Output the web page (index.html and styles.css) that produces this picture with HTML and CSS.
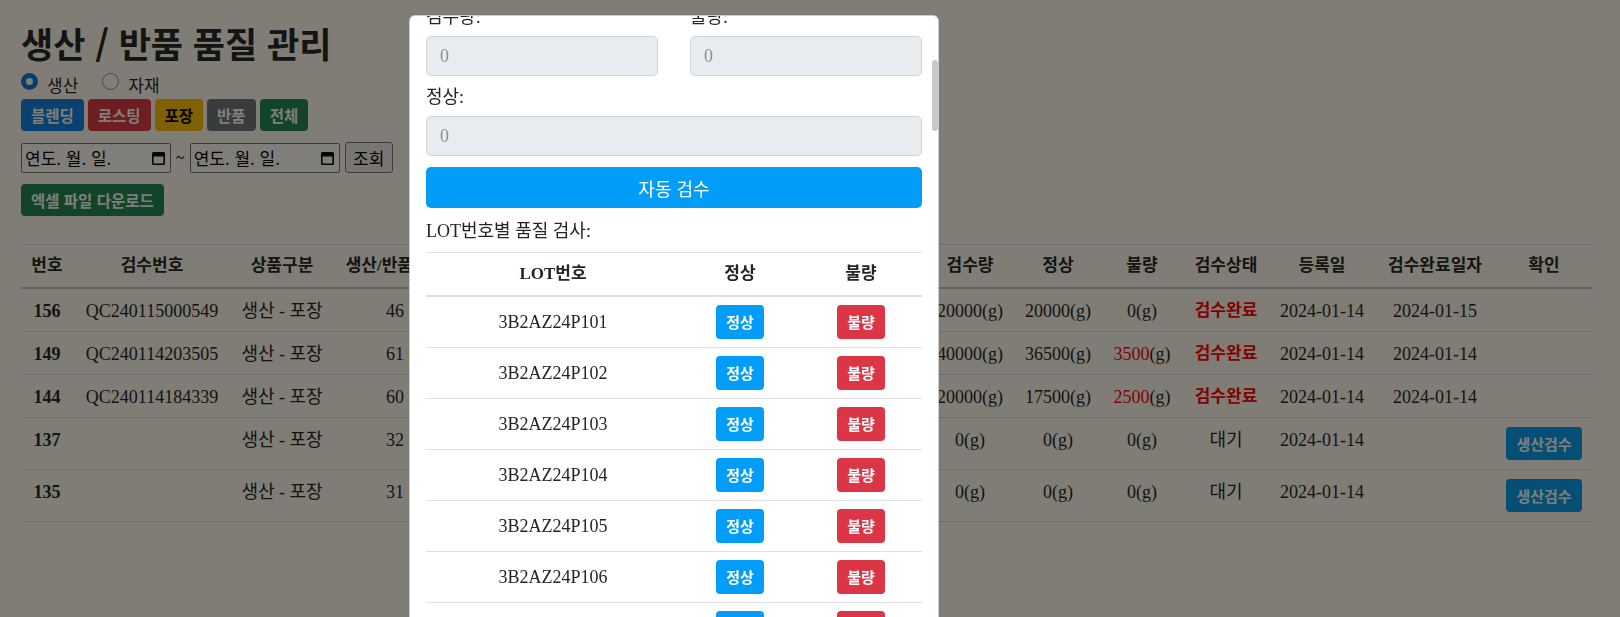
FILE: index.html
```html
<!DOCTYPE html>
<html lang="ko">
<head>
<meta charset="utf-8">
<title>생산 / 반품 품질 관리</title>
<link rel="stylesheet" href="styles.css">
</head>
<body>
<div class="page">
  <h1 class="page-title">생산 / 반품 품질 관리</h1>
  <div class="radio-row">
    <label class="radio-item"><input class="radio" type="radio" name="kind" checked><span class="radio-text">생산</span></label>
    <label class="radio-item"><input class="radio" type="radio" name="kind"><span class="radio-text">자재</span></label>
  </div>
  <div class="filter-row">
    <button class="btn btn-blue">블렌딩</button>
    <button class="btn btn-red">로스팅</button>
    <button class="btn btn-yellow">포장</button>
    <button class="btn btn-gray">반품</button>
    <button class="btn btn-green">전체</button>
  </div>
  <div class="date-row">
    <div class="date-field"><span>연도. 월. 일.</span><svg class="cal" width="15" height="16" viewBox="0 0 15 16"><path fill-rule="evenodd" d="M2.5 2h10A1.5 1.5 0 0 1 14 3.5v10a1.5 1.5 0 0 1-1.5 1.5h-10A1.5 1.5 0 0 1 1 13.5v-10A1.5 1.5 0 0 1 2.5 2zM2.6 6.4v7h9.8v-7z"/></svg></div>
    <span class="tilde">~</span>
    <div class="date-field"><span>연도. 월. 일.</span><svg class="cal" width="15" height="16" viewBox="0 0 15 16"><path fill-rule="evenodd" d="M2.5 2h10A1.5 1.5 0 0 1 14 3.5v10a1.5 1.5 0 0 1-1.5 1.5h-10A1.5 1.5 0 0 1 1 13.5v-10A1.5 1.5 0 0 1 2.5 2zM2.6 6.4v7h9.8v-7z"/></svg></div>
    <button class="search-btn">조회</button>
  </div>
  <div class="excel-row"><button class="btn btn-green btn-excel">엑셀 파일 다운로드</button></div>

  <table class="qc-table">
    <colgroup>
      <col class="c-no"><col class="c-code"><col class="c-type"><col class="c-qty">
      <col class="c-name"><col class="c-lot"><col class="c-user">
      <col class="c-insp"><col class="c-ok"><col class="c-bad"><col class="c-state">
      <col class="c-reg"><col class="c-done"><col class="c-act">
    </colgroup>
    <thead>
      <tr>
        <th>번호</th><th>검수번호</th><th>상품구분</th><th>생산/반품수량</th>
        <th>제품명</th><th>LOT 수</th><th>검수자</th>
        <th>검수량</th><th>정상</th><th>불량</th><th>검수상태</th><th>등록일</th><th>검수완료일자</th><th>확인</th>
      </tr>
    </thead>
    <tbody>
      <tr>
        <th>156</th><td>QC240115000549</td><td>생산 - 포장</td><td>46</td>
        <td>드립백 블렌드</td><td>6</td><td>관리자</td>
        <td>20000(g)</td><td>20000(g)</td><td>0(g)</td><td class="done">검수완료</td><td>2024-01-14</td><td>2024-01-15</td><td></td>
      </tr>
      <tr>
        <th>149</th><td>QC240114203505</td><td>생산 - 포장</td><td>61</td>
        <td>드립백 블렌드</td><td>8</td><td>관리자</td>
        <td>40000(g)</td><td>36500(g)</td><td><span class="red">3500</span>(g)</td><td class="done">검수완료</td><td>2024-01-14</td><td>2024-01-14</td><td></td>
      </tr>
      <tr>
        <th>144</th><td>QC240114184339</td><td>생산 - 포장</td><td>60</td>
        <td>드립백 블렌드</td><td>4</td><td>관리자</td>
        <td>20000(g)</td><td>17500(g)</td><td><span class="red">2500</span>(g)</td><td class="done">검수완료</td><td>2024-01-14</td><td>2024-01-14</td><td></td>
      </tr>
      <tr>
        <th>137</th><td></td><td>생산 - 포장</td><td>32</td>
        <td>드립백 블렌드</td><td>3</td><td></td>
        <td>0(g)</td><td>0(g)</td><td>0(g)</td><td>대기</td><td>2024-01-14</td><td></td><td><button class="btn btn-sky btn-row">생산검수</button></td>
      </tr>
      <tr>
        <th>135</th><td></td><td>생산 - 포장</td><td>31</td>
        <td>드립백 블렌드</td><td>3</td><td></td>
        <td>0(g)</td><td>0(g)</td><td>0(g)</td><td>대기</td><td>2024-01-14</td><td></td><td><button class="btn btn-sky btn-row">생산검수</button></td>
      </tr>
    </tbody>
  </table>
</div>

<div class="backdrop"></div>

<div class="modal">
  <div class="modal-body">
    <div class="field-row">
      <div class="field"><label class="field-label">검수량:</label><input class="field-input" type="text" value="0" readonly></div>
      <div class="field"><label class="field-label">불량:</label><input class="field-input" type="text" value="0" readonly></div>
    </div>
    <div class="field field-single"><label class="field-label">정상:</label><input class="field-input" type="text" value="0" readonly></div>
    <button class="auto-btn">자동 검수</button>
    <p class="lot-title">LOT번호별 품질 검사:</p>
    <table class="lot-table">
      <colgroup><col class="l-lot"><col class="l-ok"><col class="l-bad"></colgroup>
      <thead><tr><th>LOT번호</th><th>정상</th><th>불량</th></tr></thead>
      <tbody>
        <tr><td>3B2AZ24P101</td><td><button class="lot-btn lot-ok">정상</button></td><td><button class="lot-btn lot-bad">불량</button></td></tr>
        <tr><td>3B2AZ24P102</td><td><button class="lot-btn lot-ok">정상</button></td><td><button class="lot-btn lot-bad">불량</button></td></tr>
        <tr><td>3B2AZ24P103</td><td><button class="lot-btn lot-ok">정상</button></td><td><button class="lot-btn lot-bad">불량</button></td></tr>
        <tr><td>3B2AZ24P104</td><td><button class="lot-btn lot-ok">정상</button></td><td><button class="lot-btn lot-bad">불량</button></td></tr>
        <tr><td>3B2AZ24P105</td><td><button class="lot-btn lot-ok">정상</button></td><td><button class="lot-btn lot-bad">불량</button></td></tr>
        <tr><td>3B2AZ24P106</td><td><button class="lot-btn lot-ok">정상</button></td><td><button class="lot-btn lot-bad">불량</button></td></tr>
        <tr><td>3B2AZ24P107</td><td><button class="lot-btn lot-ok">정상</button></td><td><button class="lot-btn lot-bad">불량</button></td></tr>
        <tr><td>3B2AZ24P108</td><td><button class="lot-btn lot-ok">정상</button></td><td><button class="lot-btn lot-bad">불량</button></td></tr>
      </tbody>
    </table>
  </div>
  <div class="scroll-thumb"></div>
</div>
</body>
</html>
```

FILE: styles.css
```css
* { box-sizing: border-box; }

html, body {
  margin: 0;
  height: 100%;
  overflow: hidden;
}

body {
  font-family: "Liberation Serif", "Noto Sans CJK KR", serif;
  font-size: 16px;
  color: #212529;
  background: #fffdf6;
}

.page {
  padding: 0 27px 0 21px;
}

.page-title {
  font-family: "Noto Sans CJK KR", sans-serif;
  font-size: 35px;
  font-weight: 700;
  line-height: 40px;
  margin: 23px 0 0;
}

.radio-row {
  display: flex;
  align-items: flex-start;
  gap: 24px;
  margin-top: 9px;
  height: 24px;
  line-height: 24px;
}

.radio-item {
  display: flex;
  align-items: flex-start;
  gap: 9px;
}

.radio-text {
  font-size: 17px;
  margin-top: 3px;
}

.radio {
  appearance: none;
  width: 17px;
  height: 17px;
  margin: 1px 0 0;
  border: 1px solid #8f8f8f;
  border-radius: 50%;
  background: #fff;
}

.radio:checked {
  border: 5px solid #0d75e0;
}

.filter-row {
  display: flex;
  gap: 4px;
  margin-top: 3px;
}

.btn {
  font-family: "Noto Sans CJK KR", sans-serif;
  font-size: 15.5px;
  font-weight: 700;
  line-height: 20px;
  padding: 6px 10px;
  border: 0;
  border-radius: 4px;
  color: #fff;
}

.btn-blue { background: #0d7fe6; }
.btn-red { background: #dc3545; }
.btn-yellow { background: #ffc107; color: #000; }
.btn-gray { background: #6c757d; }
.btn-green { background: #198754; }
.btn-sky { background: #019df9; }

.date-row {
  display: flex;
  align-items: center;
  margin-top: 11px;
}

.date-field {
  width: 150px;
  height: 30px;
  display: flex;
  align-items: center;
  justify-content: space-between;
  padding: 0 4px 0 3px;
  border: 1px solid #767676;
  border-radius: 2px;
  background: #fff;
  font-family: "Noto Sans CJK KR", sans-serif;
  font-size: 17px;
  color: #000;
}

.cal { display: block; }

.tilde {
  margin: 0 5px;
  color: #000;
}

.search-btn {
  width: 48px;
  height: 31px;
  margin-left: 5px;
  padding: 0;
  border: 1px solid #767676;
  border-radius: 3px;
  background: #efefef;
  font-family: "Noto Sans CJK KR", sans-serif;
  font-size: 17px;
  color: #000;
}

.excel-row {
  margin-top: 11px;
}

.btn-excel {
  padding: 6px 10px;
}

.qc-table {
  width: 100%;
  margin-top: 28px;
  table-layout: fixed;
  border-collapse: collapse;
  border-top: 1px solid #dee2e6;
  font-size: 18px;
}

.c-no { width: 52px; }
.c-code { width: 158px; }
.c-type { width: 102px; }
.c-qty { width: 124px; }
.c-name { width: 200px; }
.c-lot { width: 130px; }
.c-user { width: 138px; }
.c-insp { width: 90px; }
.c-ok { width: 86px; }
.c-bad { width: 82px; }
.c-state { width: 86px; }
.c-reg { width: 106px; }
.c-done { width: 120px; }
.c-act { width: 98px; }

.qc-table th,
.qc-table td {
  padding: 9px 4px 7px;
  line-height: 26px;
  text-align: center;
  vertical-align: top;
  white-space: nowrap;
  border-bottom: 1px solid #dee2e6;
}

.qc-table thead th {
  padding-top: 8px;
  padding-bottom: 8px;
  font-size: 17px;
  border-bottom: 2px solid #c3c7cb;
}

.qc-table th { font-weight: 700; }

.red { color: #f00; }

.done {
  color: #f00;
  font-weight: 700;
  font-size: 17px;
}

.btn-row {
  display: inline-block;
  vertical-align: top;
  font-size: 15px;
  line-height: 21px;
  padding: 6px 10px;
  margin-bottom: 2px;
}

.backdrop {
  position: fixed;
  inset: 0;
  background: rgba(9, 7, 0, 0.52);
  z-index: 10;
}

.modal {
  position: fixed;
  top: 15px;
  left: 409px;
  width: 530px;
  bottom: -30px;
  background: #fff;
  border: 1px solid rgba(0, 0, 0, 0.2);
  border-radius: 6px;
  overflow: hidden;
  z-index: 20;
}

.modal-body {
  padding: 0 16px;
  margin-top: -14px;
  font-size: 18px;
}

.field-row {
  display: grid;
  grid-template-columns: 1fr 1fr;
  column-gap: 32px;
}

.field-single {
  margin-top: 6px;
}

.field-label {
  display: block;
  line-height: 26px;
  padding-top: 2px;
  margin-bottom: 6px;
}

.field-input {
  display: block;
  width: 100%;
  height: 40px;
  padding: 0 13px;
  border: 1px solid #ced4da;
  border-radius: 5px;
  background: #e9ecef;
  font-family: "Liberation Serif", serif;
  font-size: 18px;
  color: #868e96;
  outline: none;
}

.auto-btn {
  display: block;
  width: 100%;
  height: 41px;
  margin-top: 11px;
  border: 0;
  border-radius: 5px;
  background: #019df9;
  color: #fff;
  font-family: "Noto Sans CJK KR", sans-serif;
  font-size: 18px;
}

.lot-title {
  margin: 10px 0 0;
  line-height: 26px;
}

.lot-table {
  width: 100%;
  margin-top: 8px;
  table-layout: fixed;
  border-collapse: collapse;
  border-top: 1px solid #dee2e6;
}

.l-lot { width: 254px; }
.l-ok { width: 120px; }
.l-bad { width: 122px; }

.lot-table th,
.lot-table td {
  padding: 8px;
  line-height: 26px;
  text-align: center;
  vertical-align: middle;
  border-bottom: 1px solid #dee2e6;
}

.lot-table th {
  font-weight: 700;
  font-size: 17px;
  border-bottom: 2px solid #dee2e6;
}

.lot-btn {
  display: block;
  margin: 0 auto;
  width: 48px;
  height: 34px;
  padding: 0;
  border: 0;
  border-radius: 4px;
  color: #fff;
  font-family: "Noto Sans CJK KR", sans-serif;
  font-size: 15px;
  font-weight: 700;
  line-height: 34px;
}

.lot-ok { background: #019df9; }
.lot-bad { background: #dc3545; }

.scroll-thumb {
  position: absolute;
  top: 44px;
  right: 0;
  width: 6px;
  height: 71px;
  border-radius: 3px;
  background: #c8c8c8;
}
```
